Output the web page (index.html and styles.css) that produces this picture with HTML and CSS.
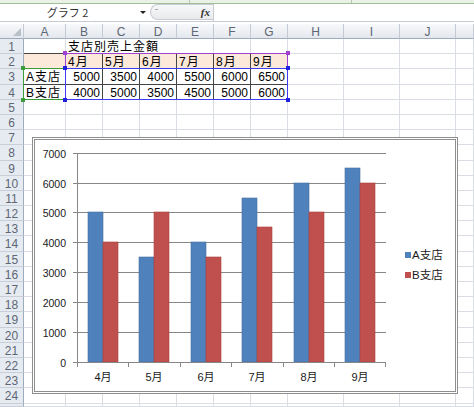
FILE: index.html
```html
<!DOCTYPE html>
<html lang="ja">
<head>
<meta charset="utf-8">
<title>グラフ</title>
<link rel="stylesheet" href="styles.css">
</head>
<body>
<div class="ribbon"><span class="rg1"></span><span class="rg2"></span><span class="rg3"></span></div>
<div class="fbar">
  <div class="namebox">グラフ 2</div>
  <div class="nbarrow"><span class="tri"></span></div>
  <div class="fxzone"><span class="knob"></span><span class="fx">fx</span></div>
  <div class="finput"></div>
</div>
<div class="sheet">
<span class="corner"></span><span class="ch">A</span><span class="ch">B</span><span class="ch">C</span><span class="ch">D</span><span class="ch">E</span><span class="ch">F</span><span class="ch">G</span><span class="ch">H</span><span class="ch">I</span><span class="ch">J</span><span class="ch"></span>
<span class="rh">1</span><span class="bb"></span><span class="title bb">支店別売上金額</span><span class="bb"></span><span class="bb"></span><span></span><span></span><span></span><span></span>
<span class="rh">2</span><span class="p bx"></span><span class="p bx l">4月</span><span class="p bx l">5月</span><span class="p bx l">6月</span><span class="p bx l">7月</span><span class="p bx l">8月</span><span class="p bx l">9月</span><span></span><span></span><span></span><span></span>
<span class="rh">3</span><span class="bx l">A支店</span><span class="bx n">5000</span><span class="bx n">3500</span><span class="bx n">4000</span><span class="bx n">5500</span><span class="bx n">6000</span><span class="bx n">6500</span><span></span><span></span><span></span><span></span>
<span class="rh">4</span><span class="bx l">B支店</span><span class="bx n">4000</span><span class="bx n">5000</span><span class="bx n">3500</span><span class="bx n">4500</span><span class="bx n">5000</span><span class="bx n">6000</span><span></span><span></span><span></span><span></span>
<span class="rh">5</span><span></span><span></span><span></span><span></span><span></span><span></span><span></span><span></span><span></span><span></span><span></span>
<span class="rh">6</span><span></span><span></span><span></span><span></span><span></span><span></span><span></span><span></span><span></span><span></span><span></span>
<span class="rh">7</span><span></span><span></span><span></span><span></span><span></span><span></span><span></span><span></span><span></span><span></span><span></span>
<span class="rh">8</span><span></span><span></span><span></span><span></span><span></span><span></span><span></span><span></span><span></span><span></span><span></span>
<span class="rh">9</span><span></span><span></span><span></span><span></span><span></span><span></span><span></span><span></span><span></span><span></span><span></span>
<span class="rh">10</span><span></span><span></span><span></span><span></span><span></span><span></span><span></span><span></span><span></span><span></span><span></span>
<span class="rh">11</span><span></span><span></span><span></span><span></span><span></span><span></span><span></span><span></span><span></span><span></span><span></span>
<span class="rh">12</span><span></span><span></span><span></span><span></span><span></span><span></span><span></span><span></span><span></span><span></span><span></span>
<span class="rh">13</span><span></span><span></span><span></span><span></span><span></span><span></span><span></span><span></span><span></span><span></span><span></span>
<span class="rh">14</span><span></span><span></span><span></span><span></span><span></span><span></span><span></span><span></span><span></span><span></span><span></span>
<span class="rh">15</span><span></span><span></span><span></span><span></span><span></span><span></span><span></span><span></span><span></span><span></span><span></span>
<span class="rh">16</span><span></span><span></span><span></span><span></span><span></span><span></span><span></span><span></span><span></span><span></span><span></span>
<span class="rh">17</span><span></span><span></span><span></span><span></span><span></span><span></span><span></span><span></span><span></span><span></span><span></span>
<span class="rh">18</span><span></span><span></span><span></span><span></span><span></span><span></span><span></span><span></span><span></span><span></span><span></span>
<span class="rh">19</span><span></span><span></span><span></span><span></span><span></span><span></span><span></span><span></span><span></span><span></span><span></span>
<span class="rh">20</span><span></span><span></span><span></span><span></span><span></span><span></span><span></span><span></span><span></span><span></span><span></span>
<span class="rh">21</span><span></span><span></span><span></span><span></span><span></span><span></span><span></span><span></span><span></span><span></span><span></span>
<span class="rh">22</span><span></span><span></span><span></span><span></span><span></span><span></span><span></span><span></span><span></span><span></span><span></span>
<span class="rh">23</span><span></span><span></span><span></span><span></span><span></span><span></span><span></span><span></span><span></span><span></span><span></span>
<span class="rh">24</span><span></span><span></span><span></span><span></span><span></span><span></span><span></span><span></span><span></span><span></span><span></span>
<span class="rh"></span><span></span><span></span><span></span><span></span><span></span><span></span><span></span><span></span><span></span><span></span><span></span>

<div class="sel sel-p"><i class="h tl"></i><i class="h tr"></i></div>
<div class="sel sel-g"><i class="h tl"></i><i class="h bl"></i></div>
<div class="sel sel-b"><i class="h tl"></i><i class="h tr"></i><i class="h bl"></i><i class="h br"></i></div>

<div class="chart">
  <span class="dot dot-t"></span><span class="dot dot-b"></span><span class="dot dot-l"></span><span class="dot dot-r"></span>
  <svg class="plot" width="420" height="251" viewBox="0 0 420 251">
    <g class="gridl">
      <line x1="38" y1="13.5" x2="351" y2="13.5"/>
      <line x1="38" y1="43.5" x2="351" y2="43.5"/>
      <line x1="38" y1="72.5" x2="351" y2="72.5"/>
      <line x1="38" y1="102.5" x2="351" y2="102.5"/>
      <line x1="38" y1="132.5" x2="351" y2="132.5"/>
      <line x1="38" y1="162.5" x2="351" y2="162.5"/>
      <line x1="38" y1="192.5" x2="351" y2="192.5"/>
    </g>
    <g class="sa">
      <rect x="53" y="72" width="15" height="150"/>
      <rect x="104" y="117" width="15" height="105"/>
      <rect x="156" y="102" width="15" height="120"/>
      <rect x="207" y="58" width="15" height="164"/>
      <rect x="259" y="43" width="15" height="179"/>
      <rect x="310" y="28" width="15" height="194"/>
    </g>
    <g class="sb">
      <rect x="68" y="102" width="15" height="120"/>
      <rect x="119" y="72" width="15" height="150"/>
      <rect x="171" y="117" width="15" height="105"/>
      <rect x="222" y="87" width="15" height="135"/>
      <rect x="274" y="72" width="15" height="150"/>
      <rect x="325" y="43" width="15" height="179"/>
    </g>
    <g class="axis">
      <line x1="42.5" y1="13" x2="42.5" y2="223"/>
      <line x1="38" y1="222.5" x2="351" y2="222.5"/>
      <line x1="42.5" y1="222" x2="42.5" y2="227"/>
      <line x1="93.5" y1="222" x2="93.5" y2="227"/>
      <line x1="145.5" y1="222" x2="145.5" y2="227"/>
      <line x1="196.5" y1="222" x2="196.5" y2="227"/>
      <line x1="248.5" y1="222" x2="248.5" y2="227"/>
      <line x1="299.5" y1="222" x2="299.5" y2="227"/>
      <line x1="350.5" y1="222" x2="350.5" y2="227"/>
    </g>
    <g class="ylab">
      <text x="31" y="17.5">7000</text>
      <text x="31" y="47.5">6000</text>
      <text x="31" y="76.5">5000</text>
      <text x="31" y="106.5">4000</text>
      <text x="31" y="136.5">3000</text>
      <text x="31" y="166.5">2000</text>
      <text x="31" y="196.5">1000</text>
      <text x="31" y="226.5">0</text>
    </g>
    <g class="xlab">
      <text x="68" y="241">4月</text>
      <text x="119" y="241">5月</text>
      <text x="171" y="241">6月</text>
      <text x="222" y="241">7月</text>
      <text x="274" y="241">8月</text>
      <text x="325" y="241">9月</text>
    </g>
    <g class="legend">
      <rect class="ka" x="370" y="112" width="6" height="6"/>
      <text x="377" y="118.5">A支店</text>
      <rect class="kb" x="370" y="132" width="6" height="6"/>
      <text x="377" y="139">B支店</text>
    </g>
  </svg>
</div>
</div>
</body>
</html>
```

FILE: styles.css
```css
* { box-sizing: border-box; margin: 0; padding: 0; }
html, body { width: 474px; height: 407px; overflow: hidden; background: #fff; }
body {
  font-family: "Liberation Sans", "Noto Sans CJK JP", sans-serif;
  font-size: 12px;
  color: #000;
}

/* ribbon edge */
.ribbon { display: flex; height: 4px; background: #eaf1e7; border-bottom: 1px solid #9fc097; }
.rg1 { width: 190px; border-right: 1px solid #b3c8ad; }
.rg2 { width: 162px; border-right: 1px solid #b3c8ad; }
.rg3 { flex: 1; }

/* formula bar */
.fbar { display: flex; height: 18px; border-bottom: 1px solid #c6ccd4; margin-bottom: 2px; background: #fff; }
.namebox {
  width: 135px; text-align: center; line-height: 17px;
  font-family: "Noto Sans CJK JP", sans-serif; font-size: 11px; color: #333;
}
.nbarrow { width: 15px; display: flex; align-items: center; justify-content: center; }
.tri { width: 0; height: 0; border-left: 3px solid transparent; border-right: 3px solid transparent; border-top: 3px solid #222; }
.fxzone {
  width: 63px; height: 16px; position: relative;
  display: flex; align-items: center; justify-content: flex-end; padding-right: 3px;
  background: linear-gradient(#f7f8f9, #e8eaed);
  border: 1px solid #c9cdd3; border-right: 0; border-radius: 8px 0 0 8px;
}
.knob { position: absolute; left: 4px; top: 4px; width: 3px; height: 1px; background: #a9aeb5; }
.fx { font-family: "Liberation Serif", serif; font-style: italic; font-weight: bold; font-size: 11px; color: #333; line-height: 14px; }
.finput { flex: 1; border-left: 1px solid #c9cdd3; }

/* sheet grid */
.sheet {
  position: relative;
  display: grid;
  grid-template-columns: 24px 42px repeat(6, 37px) repeat(3, 56px) 18px;
  grid-template-rows: 15px repeat(24, 15.2px) 3px;
}
.sheet > span {
  border-right: 1px solid #dadee4;
  border-bottom: 1px solid #dadee4;
  line-height: 14px;
  padding-top: 1px;
  white-space: nowrap;
}
.sheet > .corner {
  background: linear-gradient(#f8f9fb, #e3e7ed);
  border-right-color: #c3cad4; border-bottom-color: #9eabbd;
  position: relative;
}
.corner::after {
  content: ""; position: absolute; right: 2px; bottom: 2px; width: 0; height: 0;
  border-left: 8px solid transparent; border-bottom: 8px solid #b8c0ca;
}
.sheet > .ch {
  background: linear-gradient(#f8f9fb, #e3e7ed);
  border-right-color: #c3cad4; border-bottom-color: #9eabbd;
  text-align: center; color: #5d6775;
}
.sheet > .rh {
  background: #e6ebf1;
  border-right-color: #9eabbd; border-bottom-color: #c8cfd8;
  text-align: center; color: #5d6775;
}
.sheet > .title { grid-column: span 4; padding-left: 2px; letter-spacing: 1px; }
.sheet > .bb { border-bottom-color: #444; }
.sheet > .bx { border-right-color: #444; border-bottom-color: #444; }
.sheet > .p { background: #fde9d9; }
.sheet > .l { padding-left: 2px; letter-spacing: 1px; }
.sheet > .n { text-align: right; padding-right: 2px; }

/* selection overlays */
.sel { position: absolute; top: -1px; left: -1px; right: 0; bottom: 0; border: 1px solid; z-index: 1; }
.sel-p { grid-area: 3 / 3 / 4 / 9; border-color: #a040d0; }
.sel-g { grid-area: 4 / 2 / 6 / 3; border-color: #3a9d3a; }
.sel-b { grid-area: 4 / 3 / 6 / 9; border-color: #3c3cf0; }
.h { position: absolute; width: 4px; height: 4px; }
.sel-p .h { background: #a040d0; }
.sel-g .h { background: #3a9d3a; }
.sel-b .h { background: #2020e0; }
.tl { top: -3px; left: -3px; }
.tr { top: -3px; right: -3px; }
.bl { bottom: -3px; left: -3px; }
.br { bottom: -3px; right: -3px; }

/* chart */
.chart {
  position: absolute; left: 32px; top: 113px; width: 426px; height: 257px;
  border: 3px double #8e8e8e; background: #fff; z-index: 2;
}
.plot { display: block; }
.dot { position: absolute; }
.dot-t, .dot-b { left: 208px; width: 7px; height: 1px; background: repeating-linear-gradient(90deg, #9a9a9a 0 1px, transparent 1px 2px); }
.dot-t { top: -3px; }
.dot-b { bottom: -3px; }
.dot-l, .dot-r { top: 123px; width: 1px; height: 7px; background: repeating-linear-gradient(180deg, #9a9a9a 0 1px, transparent 1px 2px); }
.dot-l { left: -3px; }
.dot-r { right: -3px; }

.gridl line, .axis line { stroke: #878787; stroke-width: 1; shape-rendering: crispEdges; }
.sa rect, .ka { fill: #4f81bd; }
.sb rect, .kb { fill: #c0504d; }
.sa rect { stroke: #44729f; stroke-width: 0.6; }
.sb rect { stroke: #a8403d; stroke-width: 0.6; }
.ylab text { font-family: "Liberation Sans", sans-serif; font-size: 10.5px; fill: #1a1a1a; text-anchor: end; }
.xlab text { font-family: "Liberation Sans", "Noto Sans CJK JP", sans-serif; font-size: 11px; fill: #1a1a1a; text-anchor: middle; }
.legend text { font-family: "Liberation Sans", "Noto Sans CJK JP", sans-serif; font-size: 11.5px; fill: #1a1a1a; }
```
